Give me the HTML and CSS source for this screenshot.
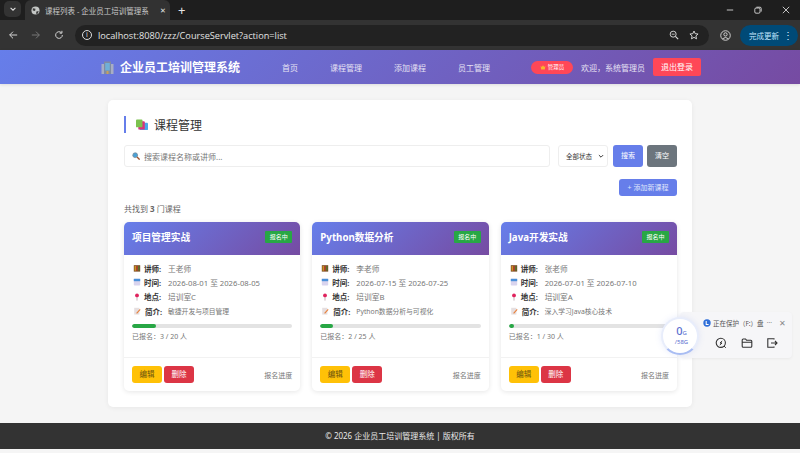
FILE: index.html
```html
<!DOCTYPE html>
<html lang="zh-CN">
<head>
    <meta charset="UTF-8">
    <title>课程列表 - 企业员工培训管理系统</title>
    <link rel="stylesheet" href="styles.css">
</head>
<body>
    <svg class="defs" width="0" height="0">
        <symbol id="i-teacher" viewBox="0 0 10 10">
            <rect x="1" y="1.5" width="8" height="8" fill="#7a4a1e"/>
            <rect x="2" y="2.5" width="1.5" height="6" fill="#e0a526"/>
            <rect x="4.2" y="2.5" width="1.5" height="6" fill="#c8452f"/>
            <rect x="6.5" y="2.5" width="1.5" height="6" fill="#4f7d3a"/>
        </symbol>
        <symbol id="i-date" viewBox="0 0 10 10">
            <rect x="1" y="1" width="8" height="8.5" rx="1" fill="#d9d4ee"/>
            <rect x="1" y="1" width="8" height="3" fill="#4a90d9"/>
        </symbol>
        <symbol id="i-pin" viewBox="0 0 10 10">
            <rect x="4.5" y="4" width="1" height="5.5" fill="#b9a0a8"/>
            <circle cx="5" cy="3" r="2.4" fill="#e0245e"/>
        </symbol>
        <symbol id="i-memo" viewBox="0 0 10 10">
            <rect x="1.5" y="1" width="6.5" height="8.5" fill="#e6dfe0"/>
            <path d="M4 7.5 8.5 2.5 9.5 3.5 5 8.5z" fill="#e8803a"/>
        </symbol>
        <symbol id="i-books" viewBox="0 0 13 13">
            <rect x="4" y="4" width="9" height="8" rx="1" fill="#4aa8e8"/>
            <rect x="2.5" y="2.5" width="7" height="9" rx="1" fill="#d8337a"/>
            <rect x="0" y="0.5" width="7" height="8.5" rx="1" fill="#7cc24e"/>
        </symbol>
    </svg>

    <!-- browser bar -->
    <div class="tabstrip">
        <div class="tab-menu">
            <svg viewBox="0 0 10 10" width="8" height="8"><path d="M2 3.5 5 6.5 8 3.5" fill="none" stroke="#ddd" stroke-width="1.4"/></svg>
        </div>
        <div class="tab">
            <svg viewBox="0 0 10 10" width="9" height="9"><circle cx="5" cy="5" r="4.5" fill="#c4c7c5"/><path d="M2 2.5 5 3 4.5 5.5 2 5zM6 6 8.5 5.5 7.5 8.5 5.5 8.5z" fill="#3c3c3c"/></svg>
            <span class="tab-title">课程列表 - 企业员工培训管理系</span>
            <span class="tab-close">✕</span>
        </div>
        <span class="tab-new">+</span>
        <div class="win-btns">
            <svg viewBox="0 0 10 10" width="8" height="8"><path d="M1 5H9" stroke="#eee" stroke-width="1"/></svg>
            <svg viewBox="0 0 10 10" width="8" height="8"><rect x="1" y="2.5" width="6.5" height="6.5" rx="1.5" fill="none" stroke="#eee"/><path d="M3 1.5H7.5Q9 1.5 9 3V7" fill="none" stroke="#eee"/></svg>
            <svg viewBox="0 0 10 10" width="8" height="8"><path d="M1 1 9 9M9 1 1 9" stroke="#eee" stroke-width="1"/></svg>
        </div>
    </div>
    <div class="toolbar">
        <div class="tool-nav">
            <svg viewBox="0 0 12 12" width="10" height="10"><path d="M11 6H2M6 2 2 6 6 10" fill="none" stroke="#d5d5d5" stroke-width="1.2"/></svg>
            <svg viewBox="0 0 12 12" width="10" height="10"><path d="M1 6H10M6 2 10 6 6 10" fill="none" stroke="#777" stroke-width="1.2"/></svg>
            <svg viewBox="0 0 12 12" width="10" height="10"><path d="M10 6A4 4 0 1 1 8.8 3.2M9.5 1V3.8H6.8" fill="none" stroke="#d5d5d5" stroke-width="1.2"/></svg>
        </div>
        <div class="urlbar">
            <span class="url-info">i</span>
            <span class="url-text">localhost:8080/zzz/CourseServlet?action=list</span>
            <svg viewBox="0 0 12 12" width="10" height="10"><circle cx="5" cy="5" r="3.6" fill="none" stroke="#ddd" stroke-width="1.1"/><path d="M7.7 7.7 11 11" stroke="#ddd" stroke-width="1.3"/><path d="M3.2 5H6.8" stroke="#ddd"/></svg>
            <svg viewBox="0 0 12 12" width="10" height="10"><path d="M6 1.2 7.4 4.4 10.9 4.8 8.3 7.1 9 10.6 6 8.8 3 10.6 3.7 7.1 1.1 4.8 4.6 4.4z" fill="none" stroke="#ddd" stroke-width="1.1"/></svg>
        </div>
        <svg class="profile" viewBox="0 0 12 12" width="11" height="11"><circle cx="6" cy="6" r="5.2" fill="none" stroke="#ddd"/><circle cx="6" cy="4.8" r="1.8" fill="none" stroke="#ddd"/><path d="M2.8 9.6Q6 6.6 9.2 9.6" fill="none" stroke="#ddd"/></svg>
        <div class="update-btn"><span>完成更新</span><span class="update-dots">⋮</span></div>
    </div>

    <nav class="navbar">
        <div class="nav-inner">
            <div class="brand">
                <svg viewBox="0 0 13 13" width="13" height="13"><rect x="0.5" y="3" width="3" height="10" fill="#a8adc4"/><rect x="9.5" y="3" width="3" height="10" fill="#a8adc4"/><rect x="3" y="0.5" width="7" height="12.5" fill="#7f8ba3"/><rect x="4.2" y="2" width="4.6" height="7.5" fill="#6fb0d8"/><rect x="5.5" y="10" width="2" height="3" fill="#c9a05c"/></svg>
                <span>企业员工培训管理系统</span>
            </div>
            <ul class="nav-links">
                <li>首页</li>
                <li>课程管理</li>
                <li>添加课程</li>
                <li>员工管理</li>
            </ul>
            <div class="nav-user">
                <span class="role-pill"><svg viewBox="0 0 10 10" width="6" height="6"><path d="M1 3 3 5 5 2 7 5 9 3 8 9H2z" fill="#f5b82e"/></svg>管理员</span>
                <span class="welcome">欢迎，系统管理员</span>
                <span class="logout">退出登录</span>
            </div>
        </div>
    </nav>

    <main class="panel">
        <h2 class="panel-title">
            <svg width="12" height="12"><use href="#i-books"/></svg>
            课程管理
        </h2>

        <div class="search-row">
            <div class="search-box">
                <svg viewBox="0 0 10 10" width="8" height="8"><circle cx="4" cy="4" r="3" fill="#4aa3d8" stroke="#7a8a99"/><path d="M6.3 6.3 9.5 9.5" stroke="#a0522d" stroke-width="1.6"/></svg>
                <span>搜索课程名称或讲师...</span>
            </div>
            <div class="status-select">
                <span>全部状态</span>
                <svg viewBox="0 0 10 10" width="6" height="6"><path d="M1.5 3.5 5 7 8.5 3.5" fill="none" stroke="#222" stroke-width="1.5"/></svg>
            </div>
            <span class="btn btn-primary btn-tall">搜索</span>
            <span class="btn btn-gray btn-tall">清空</span>
        </div>

        <div class="add-row"><span class="btn btn-primary btn-add">+ 添加新课程</span></div>

        <p class="result-count">共找到 <b>3</b> 门课程</p>

        <div class="course-grid">
            <div class="course-card">
                <div class="card-head"><h3>项目管理实战</h3><span class="badge">报名中</span></div>
                <div class="card-body">
                    <div class="info"><svg><use href="#i-teacher"/></svg><b>讲师:</b><span>王老师</span></div>
                    <div class="info"><svg><use href="#i-date"/></svg><b>时间:</b><span>2026-08-01 至 2026-08-05</span></div>
                    <div class="info"><svg><use href="#i-pin"/></svg><b>地点:</b><span>培训室C</span></div>
                    <div class="info info-desc"><svg><use href="#i-memo"/></svg><b>简介:</b><span>敏捷开发与项目管理</span></div>
                    <div class="progress"><div class="progress-fill" style="width: 15%"></div></div>
                    <p class="enrolled">已报名：3 / 20 人</p>
                </div>
                <div class="card-foot">
                    <span class="btn btn-yellow">编辑</span><span class="btn btn-red">删除</span>
                    <span class="foot-note">报名进度</span>
                </div>
            </div>

            <div class="course-card">
                <div class="card-head"><h3>Python数据分析</h3><span class="badge">报名中</span></div>
                <div class="card-body">
                    <div class="info"><svg><use href="#i-teacher"/></svg><b>讲师:</b><span>李老师</span></div>
                    <div class="info"><svg><use href="#i-date"/></svg><b>时间:</b><span>2026-07-15 至 2026-07-25</span></div>
                    <div class="info"><svg><use href="#i-pin"/></svg><b>地点:</b><span>培训室B</span></div>
                    <div class="info info-desc"><svg><use href="#i-memo"/></svg><b>简介:</b><span>Python数据分析与可视化</span></div>
                    <div class="progress"><div class="progress-fill" style="width: 8%"></div></div>
                    <p class="enrolled">已报名：2 / 25 人</p>
                </div>
                <div class="card-foot">
                    <span class="btn btn-yellow">编辑</span><span class="btn btn-red">删除</span>
                    <span class="foot-note">报名进度</span>
                </div>
            </div>

            <div class="course-card">
                <div class="card-head"><h3>Java开发实战</h3><span class="badge">报名中</span></div>
                <div class="card-body">
                    <div class="info"><svg><use href="#i-teacher"/></svg><b>讲师:</b><span>张老师</span></div>
                    <div class="info"><svg><use href="#i-date"/></svg><b>时间:</b><span>2026-07-01 至 2026-07-10</span></div>
                    <div class="info"><svg><use href="#i-pin"/></svg><b>地点:</b><span>培训室A</span></div>
                    <div class="info info-desc"><svg><use href="#i-memo"/></svg><b>简介:</b><span>深入学习Java核心技术</span></div>
                    <div class="progress"><div class="progress-fill" style="width: 3.3%"></div></div>
                    <p class="enrolled">已报名：1 / 30 人</p>
                </div>
                <div class="card-foot">
                    <span class="btn btn-yellow">编辑</span><span class="btn btn-red">删除</span>
                    <span class="foot-note">报名进度</span>
                </div>
            </div>
        </div>
    </main>

    <footer class="footer">© 2026 企业员工培训管理系统 | 版权所有</footer>

    <!-- floating disk widget -->
    <div class="disk-widget">
        <div class="disk-top">
            <svg viewBox="0 0 10 10" width="8" height="8"><circle cx="5" cy="5" r="4.6" fill="#2f6fd8"/><path d="M4 2.5V7H7" fill="none" stroke="#fff" stroke-width="1.3"/></svg>
            <span class="disk-status">正在保护（F:）盘</span>
            <span class="disk-more">···</span>
            <span class="disk-close">✕</span>
        </div>
        <div class="disk-actions">
            <svg viewBox="0 0 12 12" width="12" height="12"><circle cx="5.8" cy="5.8" r="4.6" fill="none" stroke="#333" stroke-width="1.1"/><path d="M7.2 4 5 6H7L4.8 8M9 9 10.8 10.8" fill="none" stroke="#333"/></svg>
            <svg viewBox="0 0 12 12" width="12" height="12"><path d="M1.2 3Q1.2 2 2.2 2H4.5L5.5 3.2H9.8Q10.8 3.2 10.8 4.2V9.2Q10.8 10.2 9.8 10.2H2.2Q1.2 10.2 1.2 9.2ZM1.2 5.2H10.8" fill="none" stroke="#333" stroke-width="1.1"/></svg>
            <svg viewBox="0 0 12 12" width="12" height="12"><path d="M8 2.5V1.8H1.8V10.2H8V9.5M5 6H11M9 4 11 6 9 8" fill="none" stroke="#333" stroke-width="1.1"/></svg>
        </div>
    </div>
    <div class="disk-circle">
        <div class="disk-num"><b>0</b>G</div>
        <div class="disk-total">/58G</div>
    </div>
</body>
</html>
```

FILE: styles.css
```css
* {
    box-sizing: border-box;
    margin: 0;
    padding: 0;
}

body {
    background: #f5f5f5;
    color: #333;
    font-family: "Noto Sans", "Noto Sans CJK SC", sans-serif;
    font-size: 7px;
    height: 453px;
    overflow: hidden;
}

.defs {
    position: absolute;
}

/* browser bar */
.tabstrip {
    background: #1e1e1e;
    height: 20px;
    display: flex;
    align-items: flex-end;
    color: #ddd;
}

.tab-menu {
    width: 17px;
    height: 16px;
    margin: 0 4px 3px 4px;
    background: #333;
    border-radius: 5px;
    display: flex;
    align-items: center;
    justify-content: center;
}

.tab {
    width: 145px;
    height: 20px;
    background: #323232;
    border-radius: 6px 6px 0 0;
    display: flex;
    align-items: center;
    padding: 0 0 0 6px;
    gap: 5px;
}

.tab-title {
    width: 105px;
    overflow: hidden;
    white-space: nowrap;
    font-size: 7.5px;
    color: #c8c8c8;
}

.tab-close {
    font-size: 7px;
    margin-left: 5px;
    color: #e6e6e6;
}

.tab-new {
    font-size: 13px;
    line-height: 20px;
    margin-left: 8px;
    color: #e6e6e6;
}

.win-btns {
    margin-left: auto;
    height: 20px;
    display: flex;
    align-items: center;
    gap: 20px;
    padding-right: 10px;
}

.toolbar {
    background: #333;
    height: 30px;
    display: flex;
    align-items: center;
    padding-left: 8px;
}

.tool-nav {
    display: flex;
    gap: 13px;
    width: 67px;
}

.urlbar {
    width: 634px;
    height: 21px;
    background: #222;
    border-radius: 11px;
    display: flex;
    align-items: center;
    padding: 0 10px 0 7px;
    gap: 10px;
}

.url-info {
    width: 10px;
    height: 10px;
    border: 1px solid #ddd;
    border-radius: 50%;
    color: #ddd;
    font-size: 7px;
    line-height: 8px;
    text-align: center;
}

.url-text {
    flex: 1;
    margin-left: -4px;
    color: #e3e3e3;
    font-family: "Open Sans", sans-serif;
    font-size: 9.2px;
}

.profile {
    margin-left: 11px;
}

.update-btn {
    width: 58px;
    height: 21px;
    margin-left: 9px;
    background: #004a77;
    color: #c2e7ff;
    border-radius: 11px;
    display: flex;
    align-items: center;
    justify-content: space-between;
    padding: 0 5px 0 9px;
    font-size: 7.5px;
}

.update-dots {
    font-size: 10px;
    color: #dcefff;
}

/* site nav */
.navbar {
    height: 34px;
    background: linear-gradient(135deg, #667eea, #764ba2);
    box-shadow: 0 1px 3px rgba(0, 0, 0, 0.1);
    color: #fff;
}

.nav-inner {
    width: 600px;
    height: 100%;
    margin-left: 101px;
    display: flex;
    align-items: center;
}

.brand {
    display: flex;
    align-items: center;
    gap: 6px;
    font-size: 12px;
    font-weight: 700;
}

.nav-links {
    list-style: none;
    display: flex;
    gap: 32px;
    margin-left: 42px;
    font-size: 8px;
    color: #e6e2f3;
}

.nav-user {
    margin-left: auto;
    display: flex;
    align-items: center;
}

.role-pill {
    width: 42px;
    height: 13px;
    background: #ff4757;
    border-radius: 7px;
    font-size: 5.5px;
    display: flex;
    align-items: center;
    justify-content: center;
    gap: 2px;
}

.welcome {
    margin: 0 8px;
    font-size: 8px;
    color: #e6e2f3;
}

.logout {
    width: 48px;
    height: 18px;
    background: #ff4757;
    border-radius: 2px;
    font-size: 8px;
    line-height: 18px;
    text-align: center;
}

/* main panel */
.panel {
    width: 584px;
    height: 307px;
    margin: 16px 0 16px 108px;
    padding: 16px 15px 16px 16px;
    background: #fff;
    border-radius: 5px;
    box-shadow: 0 1px 5px rgba(0, 0, 0, 0.06);
}

.panel-title {
    height: 17px;
    border-left: 2px solid #667eea;
    padding-left: 10px;
    display: flex;
    align-items: center;
    gap: 6px;
    font-size: 12px;
    font-weight: 400;
    color: #333;
}

.search-row {
    display: flex;
    align-items: center;
    margin-top: 12px;
}

.search-box {
    width: 426px;
    height: 22px;
    border: 1px solid #eee;
    border-radius: 3px;
    display: flex;
    align-items: center;
    gap: 4px;
    padding-left: 7px;
    font-size: 8px;
    color: #777;
}

.status-select {
    width: 50px;
    height: 22px;
    margin: 0 5px 0 8px;
    border: 1px solid #eee;
    border-radius: 3px;
    display: flex;
    align-items: center;
    justify-content: space-between;
    padding: 0 3px 0 7px;
    font-size: 6.5px;
    color: #333;
}

.btn {
    display: inline-block;
    text-align: center;
    border-radius: 3px;
    color: #fff;
}

.btn-tall {
    width: 30px;
    height: 22px;
    line-height: 22px;
}

.btn-gray {
    margin-left: 4px;
    background: #6c757d;
}

.btn-primary {
    background: #667eea;
}

.add-row {
    display: flex;
    justify-content: flex-end;
    margin-top: 12px;
}

.btn-add {
    width: 58px;
    height: 17px;
    line-height: 17px;
    color: #dfe4fb;
}

.result-count {
    margin-top: 8px;
    height: 10px;
    line-height: 10px;
    font-size: 8px;
    color: #666;
}

.course-grid {
    display: grid;
    grid-template-columns: repeat(3, 1fr);
    gap: 12px;
    margin-top: 8px;
}

.course-card {
    height: 169px;
    background: #fff;
    border-radius: 5px;
    box-shadow: 0 1px 5px rgba(0, 0, 0, 0.1);
    overflow: hidden;
    display: flex;
    flex-direction: column;
}

.card-head {
    height: 33px;
    flex: none;
    background: linear-gradient(135deg, #667eea, #764ba2);
    color: #fff;
    display: flex;
    align-items: center;
    justify-content: space-between;
    padding: 0 8px 3px;
}

.card-head h3 {
    font-size: 9.7px;
    font-weight: 700;
}

.badge {
    width: 27px;
    height: 12px;
    background: #28a745;
    border-radius: 1px;
    font-size: 6px;
    line-height: 12px;
    text-align: center;
}

.card-body {
    flex: 1;
    padding: 6px 8px 0;
}

.info {
    height: 14.3px;
    display: flex;
    align-items: center;
    gap: 3px;
    font-size: 7.7px;
    color: #777;
}

.info svg {
    width: 8px;
    height: 8px;
    margin-left: 1px;
    flex: none;
}

.info b {
    width: 21px;
    font-size: 7.5px;
    color: #333;
    font-weight: 700;
}

.info-desc {
    height: 15px;
    font-size: 6.8px;
}

.info-desc b {
    width: 20px;
    font-size: 7.5px;
    margin-left: 1px;
}

.progress {
    height: 4px;
    margin-top: 5px;
    background: #e3e3e3;
    border-radius: 2px;
    overflow: hidden;
}

.progress-fill {
    height: 100%;
    background: #28a745;
    border-radius: 2px;
}

.enrolled {
    margin-top: 3px;
    line-height: 12px;
    color: #777;
}

.card-foot {
    height: 34px;
    flex: none;
    border-top: 1px solid #f2f2f2;
    display: flex;
    align-items: center;
    gap: 2px;
    padding: 0 8px;
}

.card-foot .btn {
    width: 30px;
    height: 17px;
    line-height: 17px;
    font-size: 7.5px;
}

.btn-yellow {
    background: #ffc107;
    color: #6b5310 !important;
}

.btn-red {
    background: #dc3545;
}

.foot-note {
    margin-left: auto;
    color: #777;
}

.footer {
    height: 26px;
    background: #333;
    color: #e8e8e8;
    font-size: 8px;
    line-height: 26px;
    text-align: center;
}

/* floating disk widget */
.disk-widget {
    position: absolute;
    left: 680px;
    top: 312px;
    width: 112px;
    height: 46px;
    padding: 5px 6px 0 23px;
    background: #f6f6f8;
    border-radius: 4px;
    box-shadow: 0 1px 3px rgba(0, 0, 0, 0.05);
}

.disk-top {
    display: flex;
    align-items: center;
    gap: 2px;
    height: 11px;
    font-size: 6.5px;
    color: #555;
}

.disk-status {
    white-space: nowrap;
}

.disk-more {
    margin-left: auto;
    color: #888;
}

.disk-close {
    margin-left: 5px;
    font-size: 7.5px;
    color: #888;
}

.disk-actions {
    display: flex;
    justify-content: space-between;
    width: 63px;
    margin: 9px 0 0 12px;
}

.disk-circle {
    position: absolute;
    left: 661px;
    top: 317px;
    width: 38px;
    height: 38px;
    border-radius: 50%;
    background: #fff;
    border: 2px solid #e8edfb;
    border-bottom-color: #a9bdf3;
    box-shadow: 0 0 6px rgba(102, 126, 234, 0.15);
    padding: 7px 0 0 3px;
    text-align: center;
    color: #5a6fd0;
    font-size: 6px;
    line-height: 9px;
}

.disk-num b {
    font-size: 11px;
    font-weight: 500;
}
```
